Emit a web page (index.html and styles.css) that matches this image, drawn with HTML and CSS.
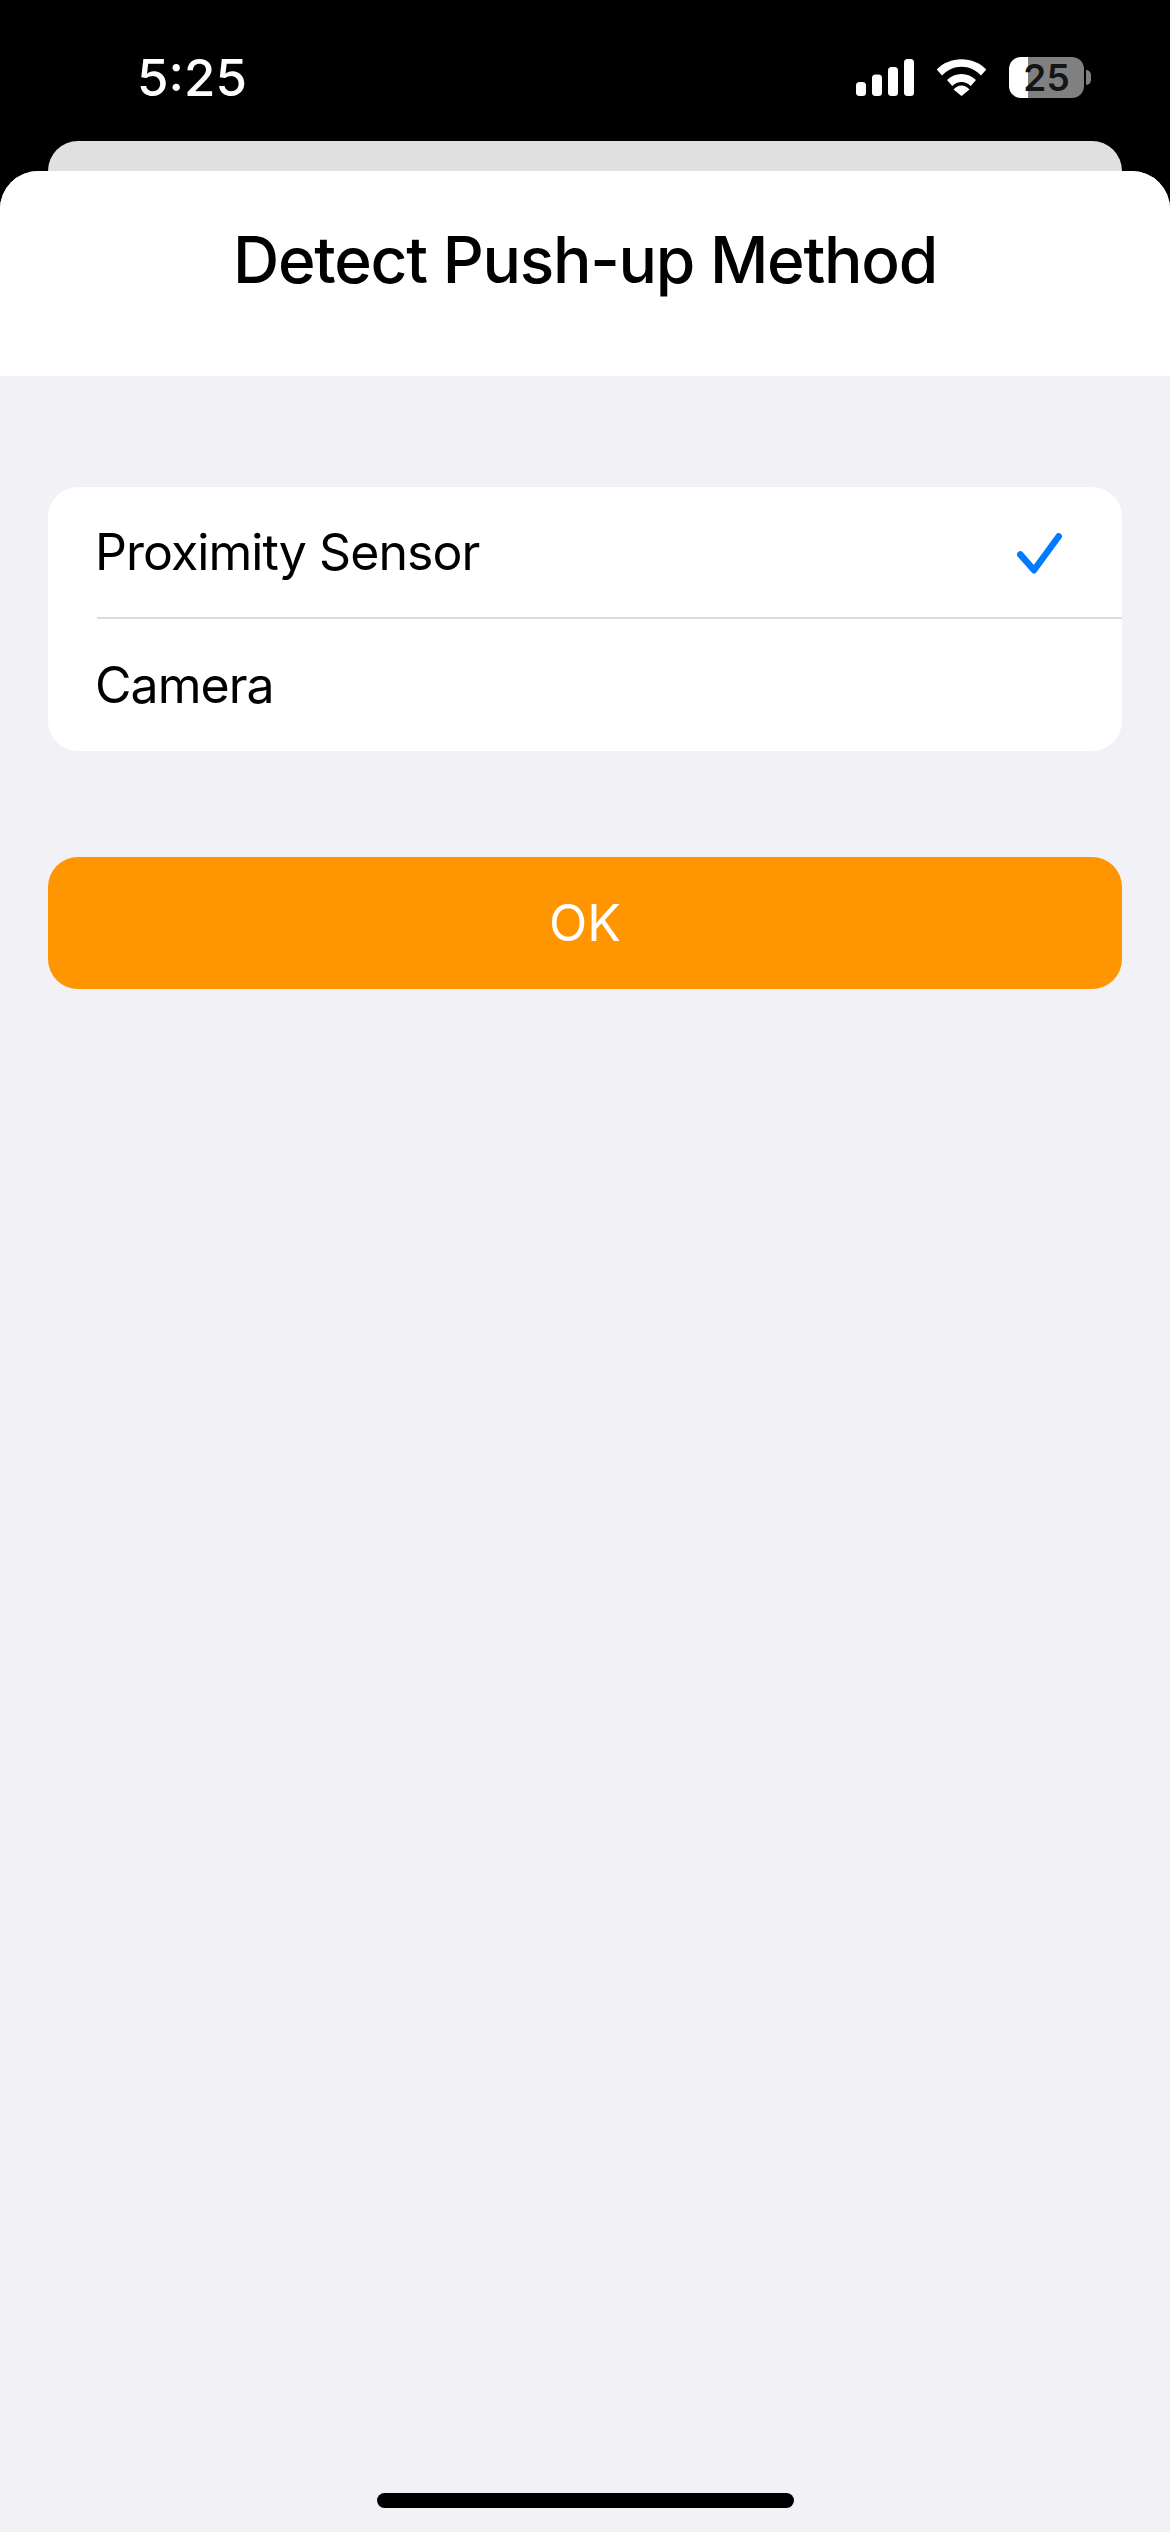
FILE: index.html
```html
<!DOCTYPE html>
<html lang="en">
<head>
<meta charset="utf-8">
<title>Detect Push-up Method</title>
<link rel="stylesheet" href="styles.css">
</head>
<body>
<div class="screen">
  <header class="status">
    <span class="time">5:25</span>
    <div class="status-icons">
      <svg class="signal" width="58" height="37" viewBox="0 0 58 37"><rect x="0" y="23" width="10" height="14" rx="3.5"/><rect x="16" y="15.500" width="10" height="21.500" rx="3.500"/><rect x="32" y="8" width="10" height="29" rx="3.500"/><rect x="48" y="0" width="10" height="37" rx="3.500"/></svg>
      <svg class="wifi" width="51" height="37" viewBox="0 0 51 37"><path d="M.7 10.500C7 4 16 .3 25.500 .3S44 4 50.300 10.500L45 16.500C39.500 11 33 7.800 25.500 7.800S11.500 11 6 16.500Z"/><path d="M11 21C15 17 20 15 25.500 15S36 17 40 21L34.700 27C32 24.500 29 23 25.500 23S19 24.500 16.300 27Z"/><path d="M17.500 30.500C20 28 22.500 26.500 25.500 26.500S31 28 33.500 30.500L25.500 37Z"/></svg>
      <div class="battery"><span class="battery-level">25</span></div>
    </div>
  </header>
  <div class="back-card"></div>
  <main class="sheet">
    <div class="sheet-header"><h1 class="title">Detect Push-up Method</h1></div>
    <div class="sheet-body">
      <ul class="options">
        <li class="option option-first">
          <span class="option-label">Proximity Sensor</span>
          <svg class="check" width="46" height="44" viewBox="0 0 46 44"><path d="M3.300 21.500L17 37.200L41.700 3.300"/></svg>
        </li>
        <li class="option"><span class="option-label">Camera</span></li>
      </ul>
      <button class="ok" type="button">OK</button>
    </div>
    <div class="home-bar"></div>
  </main>
</div>
</body>
</html>
```
FILE: styles.css
```css
* { box-sizing: border-box; }
html, body { margin: 0; padding: 0; }
body {
  background: #000;
  font-family: Inter, "Liberation Sans", sans-serif;
  color: #000;
}
.screen {
  width: 1170px;
  height: 2532px;
  display: flex;
  flex-direction: column;
  overflow: hidden;
}
.status {
  height: 141px;
  padding: 57px 79px 0 137px;
  display: flex;
  justify-content: space-between;
  align-items: flex-start;
  color: #fff;
}
.time {
  font-size: 51px;
  font-weight: 500;
  line-height: 42px;
}
.status-icons {
  display: flex;
  align-items: flex-start;
  gap: 22px;
  height: 41px;
}
.signal, .wifi { fill: #fff; margin-top: 2px; display: block; }
.battery {
  position: relative;
  width: 75px;
  height: 41px;
  border-radius: 12px;
  background: linear-gradient(to right, #fff 0, #fff 19px, #808080 19px, #808080 100%);
  display: flex;
  align-items: center;
  justify-content: center;
  margin-right: 7px;
}
.battery::after {
  content: "";
  position: absolute;
  left: 77px;
  top: 13px;
  width: 5px;
  height: 15px;
  border-radius: 0 8px 8px 0;
  background: #808080;
}
.battery-level {
  font-size: 37px;
  font-weight: 600;
  line-height: 41px;
  color: #141414;
}
.back-card {
  height: 30px;
  margin: 0 48px;
  background: #e0e0e0;
  border-radius: 30px 30px 0 0;
  flex: none;
}
.sheet {
  flex: 1;
  display: flex;
  flex-direction: column;
  background: #f1f1f6;
  border-radius: 38px 38px 0 0;
  overflow: hidden;
}
.sheet-header {
  height: 205px;
  background: #fff;
  display: flex;
  justify-content: center;
  padding-top: 47px;
  flex: none;
}
.title {
  margin: 0;
  font-size: 64px;
  font-weight: 500;
  line-height: 84px;
  letter-spacing: -1.25px;
  color: #000;
}
.sheet-body {
  padding: 111px 48px 0;
  display: flex;
  flex-direction: column;
  gap: 106px;
}
.options {
  list-style: none;
  margin: 0;
  padding: 0 0 0 49px;
  background: #fff;
  border-radius: 30px;
  height: 264px;
}
.option {
  height: 132px;
  display: flex;
  align-items: center;
  justify-content: space-between;
  padding-right: 59px;
  font-size: 50px;
  font-weight: 400;
  letter-spacing: -0.95px;
}
.option-label { margin-left: -2px; }
.option-first { border-bottom: 2px solid #dcdcdf; }
.check {
  fill: none;
  stroke: #007aff;
  stroke-width: 6.500;
  stroke-linecap: round;
  stroke-linejoin: round;
  display: block;
  margin-top: 5px;
}
.ok {
  height: 132px;
  border: 0;
  padding: 0;
  border-radius: 30px;
  background: #ff9500;
  color: #fff;
  font-family: inherit;
  font-size: 50px;
  font-weight: 400;
}
.home-bar {
  width: 417px;
  height: 15px;
  border-radius: 8px;
  background: #000;
  margin: auto auto 24px;
  flex: none;
}
```
